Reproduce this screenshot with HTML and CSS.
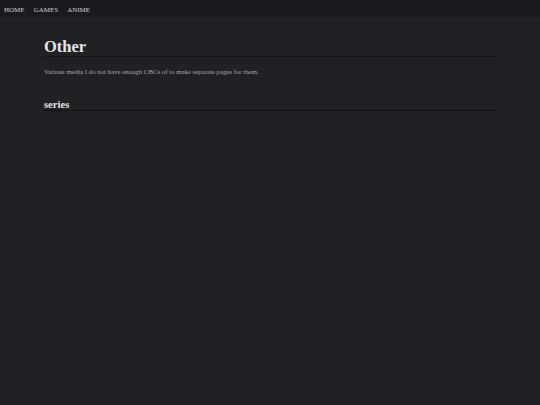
FILE: index.html
```html
<!DOCTYPE html>
<html>
<head>
  <title>Other</title>
  <link rel="stylesheet" href="styles.css">
</head>
<body>
  <nav class="topnav">
    <a href="#">HOME</a>
    <a href="#">GAMES</a>
    <a href="#">ANIME</a>
  </nav>

  <div class="content">
    <h1>Other</h1>
    <p>Various media I do not have enough CBCs of to make separate pages for them.</p>
    <h2>series</h2>
  </div>
</body>
</html>
```

FILE: styles.css
```css
html, body {
  margin: 0;
  padding: 0;
  height: 100%;
}

body {
  background-color: #202125;
  font-family: "Liberation Serif", "Times New Roman", serif;
  color: #d8d8d8;
}

.topnav {
  background-color: #1b1b1f;
  height: 17px;
  display: flex;
  align-items: center;
  padding: 0 4px;
  gap: 9px;
}

.topnav a {
  color: #d0d0d0;
  text-decoration: none;
  font-size: 7px;
  padding-top: 3px;
}

.content {
  padding: 0 44px;
}

h1 {
  font-size: 16.5px;
  line-height: 18px;
  margin: 21px 0 0;
  padding-bottom: 0;
  border-bottom: 1px solid #131316;
  color: #e4e4e4;
}

p {
  font-size: 6.8px;
  color: #a8a8aa;
  margin: 11px 0 0;
}

h2 {
  font-size: 10.6px;
  margin: 24px 0 0;
  border-bottom: 1px solid #131316;
  color: #e4e4e4;
}
```
